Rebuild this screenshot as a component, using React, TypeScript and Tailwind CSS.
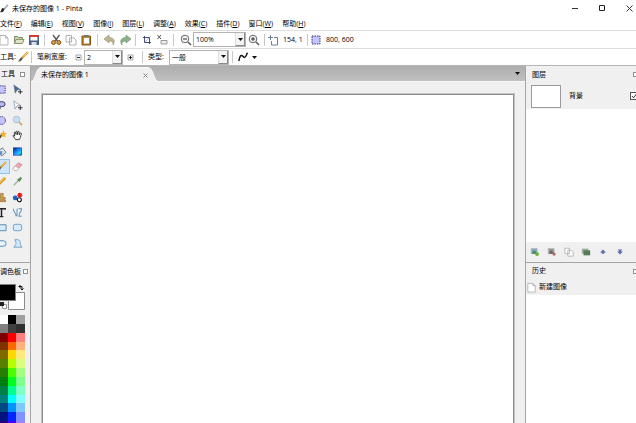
import React from 'react';

type IconProps = { children: React.ReactNode; className?: string; box?: string };

const Icon: React.FC<IconProps> = ({ children, className = 'w-3 h-3', box = '0 0 12 12' }) => (
    <svg viewBox={box} className={`block shrink-0 ${className}`} fill="none" aria-hidden="true">
        {children}
    </svg>
);

const menus = [
    ['文件', 'F'],
    ['编辑', 'E'],
    ['视图', 'V'],
    ['图像', 'I'],
    ['图层', 'L'],
    ['调整', 'A'],
    ['效果', 'C'],
    ['插件', 'D'],
    ['窗口', 'W'],
    ['帮助', 'H'],
];

const brush = (
    <>
        <path d="M11 1 5 7" stroke="#e0a030" strokeWidth="2.2" />
        <path d="M11 1 7 5" stroke="#f6cf6a" strokeWidth="1" />
        <path d="M5.8 7.2C5 10 3 10.5 1 10.5 2.5 9.5 2.5 7 4.5 6.2Z" fill="#5a5a5a" />
    </>
);
const page = (
    <path d="M2 1.5h5.5L10 4v7H2zM7.5 1.5V4H10" fill="#fff" stroke="#a4a4a4" strokeWidth="0.8" />
);
const copy = (
    <path d="M1 1.5h5.5V8H1zM4.5 4H9l2 2v5H4.5z" fill="#fff" stroke="#a9a9a9" strokeWidth="0.9" />
);
const magnifier = (
    <>
        <circle cx="5" cy="5" r="3.8" fill="#f2f2f2" stroke="#666" strokeWidth="1" />
        <path d="m8 8 3 3" stroke="#555" strokeWidth="1.4" />
    </>
);
const dashed = (
    <rect x="2" y="2" width="8" height="8" fill="#c4c4ff" stroke="#34347a" strokeDasharray="1.5 1" />
);

const tools: { name: string; art: React.ReactNode }[] = [
    { name: '矩形选择', art: dashed },
    {
        name: '移动所选像素',
        art: (
            <>
                <path d="m2 1 7 5-3.5.5L3.5 10z" fill="#4a6a8c" stroke="#53708d" strokeWidth="0.6" />
                <path d="M9 6v5M6.5 8.5h5" stroke="#222" />
            </>
        ),
    },
    {
        name: '套索选择',
        art: (
            <>
                <ellipse cx="6" cy="4.5" rx="4" ry="2.8" fill="#b4b6ed" stroke="#33385c" />
                <path d="M3 6.5c2 1 2 3 0 4" stroke="#33385c" strokeWidth="1.2" />
            </>
        ),
    },
    {
        name: '移动选区',
        art: (
            <>
                <path d="m2 1 7 5-3.5.5L3.5 10z" fill="#fff" stroke="#7d8fa5" strokeWidth="0.8" />
                <path d="M9 6v5M6.5 8.5h5" stroke="#222" />
            </>
        ),
    },
    {
        name: '椭圆选择',
        art: <circle cx="6" cy="6" r="4.3" fill="#c4c4ff" stroke="#34347a" strokeDasharray="1.5 1" />,
    },
    {
        name: '缩放',
        art: (
            <>
                <path d="m7 7 4 4" stroke="#d9a868" strokeWidth="2" />
                <circle cx="5" cy="5" r="3.6" fill="#c3e0f5" stroke="#a8bccb" />
            </>
        ),
    },
    {
        name: '魔术棒',
        art: (
            <>
                <path d="m1 11 6-6" stroke="#4a4030" strokeWidth="2.4" />
                <path d="m8 0 1 3 3 .5-2.200 1.800.7 3L8 7 5.500 8l.8-2.500-1.800-2L7 3z" fill="#f5b229" />
            </>
        ),
    },
    {
        name: '平移',
        art: (
            <path
                d="M4 10.5 1 6.5c0-1 1-1 2 .2L2.5 3c.2-1 1-1 1.5 0l.5 2-.2-3c.3-1 1.2-1 1.5 0L6 5l.5-3c.4-.8 1.3-.6 1.4.2L7.8 5.5 9 3.5c.6-.7 1.4-.2 1.2.7L9 8.5 8 10.5z"
                fill="#fff"
                stroke="#222"
                strokeWidth="0.9"
            />
        ),
    },
    {
        name: '油漆桶',
        art: (
            <>
                <path d="m3 5 4-3 4 5-5 4z" fill="#dbe3ea" stroke="#6c7d8c" />
                <path d="M0 4c1 2 5 1 7 2l-1 4-4-3z" fill="#5b91c8" />
            </>
        ),
    },
    {
        name: '渐变',
        art: (
            <>
                <defs>
                    <linearGradient id="gradTool" x1="0" y1="0" x2="1" y2="1">
                        <stop offset="0" stopColor="#00157e" />
                        <stop offset="0.5" stopColor="#1e90ff" />
                        <stop offset="0.75" stopColor="#25d5e8" />
                        <stop offset="1" stopColor="#1838c0" />
                    </linearGradient>
                </defs>
                <rect x="1.5" y="2" width="9" height="8" fill="url(#gradTool)" stroke="#1730a0" strokeWidth="0.7" />
            </>
        ),
    },
    { name: '画笔', art: brush },
    {
        name: '橡皮擦',
        art: (
            <>
                <path d="m1 8 6-6 4 2-6 6.5H3z" fill="#f4a6ae" stroke="#b98b90" strokeWidth="0.8" />
                <path d="m1 8 2.5-2.5L7.5 8 5 10.5H3z" fill="#fff" stroke="#a9a3a3" strokeWidth="0.7" />
            </>
        ),
    },
    {
        name: '铅笔',
        art: (
            <>
                <path d="m10 2-7 7" stroke="#e39a2c" strokeWidth="3" />
                <path d="m9.5 1.5-7 7" stroke="#fbd680" strokeWidth="1" />
                <path d="m1 11 1-3 2 2z" fill="#6b4d27" />
            </>
        ),
    },
    {
        name: '取色器',
        art: (
            <>
                <path d="m2 10 5-5" stroke="#a2b09b" strokeWidth="1.5" />
                <path d="m6 4 2 2 2.5-3.5-1-1z" fill="#4a9b45" stroke="#4d7c49" strokeWidth="0.8" />
            </>
        ),
    },
    {
        name: '克隆图章',
        art: <path d="M5 1.5h3L7.5 6H10v2H2V6h3zM1.5 9h9v1.5h-9z" fill="#d7a34b" stroke="#8e6423" strokeWidth="0.7" />,
    },
    {
        name: '重新着色',
        art: (
            <>
                <circle cx="8.5" cy="3.5" r="2.6" fill="#ee1c1c" />
                <circle cx="3.5" cy="6.5" r="2.6" fill="#1d5fc2" />
                <circle cx="8" cy="8.5" r="2.2" fill="#fff" stroke="#111" strokeWidth="1.2" />
            </>
        ),
    },
    {
        name: '文字',
        art: <path d="M2 3V2h8v1M6 2v8M4 10.5h4" stroke="#222" strokeWidth="1.6" />,
    },
    {
        name: '直线/曲线',
        art: (
            <path d="M1.5 2c0 4 3 4 3 8M5.5 2v8M7 2h3.5c0 3-3 5-3 8h3" stroke="#6390bd" strokeWidth="1.1" />
        ),
    },
    { name: '矩形', art: <path d="M1 3h10v6.5H1z" fill="#d7ebfa" stroke="#4f86b5" /> },
    { name: '圆角矩形', art: <rect x="1.5" y="2.5" width="9" height="7" rx="2" fill="#d7ebfa" stroke="#699bc4" /> },
    { name: '椭圆', art: <rect x="0" y="3" width="11" height="6" rx="3" fill="#e7f4fd" stroke="#4f86b5" /> },
    {
        name: '自由形状',
        art: <path d="M3 2c4-1 6 1 6 3s0 3 2 5H2c3-3 3-5 1-8z" fill="#d7ebfa" stroke="#699bc4" />,
    },
];

const palette = [
    'bg-[#ffffff]', 'bg-[#000000]', 'bg-[#a0a0a0]',
    'bg-[#808080]', 'bg-[#404040]', 'bg-[#303030]',
    'bg-[#7f0000]', 'bg-[#ff0000]', 'bg-[#ff7f7f]',
    'bg-[#7f3300]', 'bg-[#ff6a00]', 'bg-[#ffb27f]',
    'bg-[#7f6a00]', 'bg-[#ffd800]', 'bg-[#ffe97f]',
    'bg-[#5b7f00]', 'bg-[#b6ff00]', 'bg-[#daff7f]',
    'bg-[#267f00]', 'bg-[#4cff00]', 'bg-[#a5ff7f]',
    'bg-[#007f0e]', 'bg-[#00ff21]', 'bg-[#7fff8e]',
    'bg-[#007f46]', 'bg-[#00ff90]', 'bg-[#7fffc5]',
    'bg-[#007f7f]', 'bg-[#00ffff]', 'bg-[#7fffff]',
    'bg-[#004a7f]', 'bg-[#0094ff]', 'bg-[#7fc9ff]',
    'bg-[#00137f]', 'bg-[#0026ff]', 'bg-[#7f92ff]',
    'bg-[#21007f]', 'bg-[#4800ff]', 'bg-[#a17fff]',
];

const ToolButton: React.FC<{ label: string; children: React.ReactNode }> = ({ label, children }) => (
    <button type="button" aria-label={label} className="flex w-[15px] shrink-0 items-center justify-center">
        <Icon>{children}</Icon>
    </button>
);

const Separator: React.FC<{ className?: string }> = ({ className = 'mx-[3px]' }) => (
    <span className={`h-3 w-px shrink-0 bg-[#c8c8c8] ${className}`} />
);

const Arrow: React.FC = () => (
    <Icon className="h-[3px] w-[5px]" box="0 0 5 3">
        <path d="M0 0h5L2.5 3z" fill="#111" />
    </Icon>
);

const Combo: React.FC<{ label: string; options: string[]; className: string }> = ({ label, options, className }) => (
    <div className={`relative h-[15px] shrink-0 border border-[#b4b4b4] bg-white ${className}`}>
        <select aria-label={label} className="block h-full w-full appearance-none bg-transparent pl-[2px] leading-[13px] outline-none">
            {options.map((o) => (
                <option key={o}>{o}</option>
            ))}
        </select>
        <span className="pointer-events-none absolute inset-y-0 right-0 flex w-[10px] items-center justify-center border-r border-b border-l border-[#8a8a8a] border-l-[#dedede] bg-[#f3f3f3]">
            <Arrow />
        </span>
    </div>
);

const FloatButton: React.FC<{ label: string; className?: string }> = ({ label, className = '' }) => (
    <button type="button" aria-label={label} className={`h-[5px] w-[5px] shrink-0 border border-[#909090] bg-white ${className}`} />
);

const TitleBar: React.FC = () => (
    <header className="flex h-[17px] shrink-0 items-center">
        <Icon className="h-[11px] w-[9px]">
            <path d="m10.5 1-5 6" stroke="#a9adb0" strokeWidth="2.5" />
            <path d="M6 6.5 3.5 5C1.5 6.5 2 9 0 11c3 .5 5.5-1 6-4.5z" fill="#2b2b2b" />
        </Icon>
        <h1 className="ml-[3px]">未保存的图像 1 - Pinta</h1>
        <div className="ml-auto flex">
            <button type="button" aria-label="最小化" className="flex w-[27px] justify-center">
                <Icon className="h-[7px] w-[7px]" box="0 0 7 7"><path d="M0 3.5h6" stroke="#333" /></Icon>
            </button>
            <button type="button" aria-label="最大化" className="flex w-[27px] justify-center">
                <Icon className="h-[7px] w-[7px]" box="0 0 7 7"><path d="M.5.5h5v5h-5z" stroke="#222" /></Icon>
            </button>
            <button type="button" aria-label="关闭" className="flex w-[20px] justify-center pl-[6px]">
                <Icon className="h-[7px] w-[7px]" box="0 0 7 7"><path d="m.5.5 6 6m0-6-6 6" stroke="#222" strokeWidth="0.9" /></Icon>
            </button>
        </div>
    </header>
);

const MenuBar: React.FC = () => (
    <nav className="flex h-[13px] shrink-0 items-center gap-[9px]">
        {menus.map(([name, key]) => (
            <button key={key} type="button" className="whitespace-nowrap">
                {name}(<u>{key}</u>)
            </button>
        ))}
    </nav>
);

const MainToolbar: React.FC = () => (
    <div className="flex h-[18px] shrink-0 items-center overflow-hidden border-t border-[#dedede]">
        <div className="-ml-1 flex">
            <ToolButton label="新建">{page}</ToolButton>
            <ToolButton label="打开">
                <path d="M1.5 9.5v-7h3l1 1h4v2" fill="#c9d3ad" stroke="#808d62" />
                <path d="m1.5 9.5 1.5-4h8l-1.5 4z" fill="#dce4c4" stroke="#8b986d" />
            </ToolButton>
            <ToolButton label="保存">
                <path d="M1 1h10v10H1z" fill="#4a6288" />
                <path d="M1 1h10v2H1z" fill="#cf3a35" />
                <path d="M2.5 3h7v3.5h-7z" fill="#fff" />
                <path d="M3.5 8h5v3h-5z" fill="#d6dfeb" />
            </ToolButton>
        </div>
        <Separator />
        <div className="flex">
            <ToolButton label="剪切">
                <path d="m3 1 4.5 6M9.5 1 5 7" stroke="#555" strokeWidth="1.3" />
                <circle cx="3.5" cy="8.5" r="2" fill="#d49a48" stroke="#8a5b1d" />
                <circle cx="8.8" cy="8.5" r="2" fill="#d49a48" stroke="#8a5b1d" />
            </ToolButton>
            <ToolButton label="复制">{copy}</ToolButton>
            <ToolButton label="粘贴">
                <path d="M2 2h8.5v9H2z" fill="#c58632" stroke="#805216" />
                <path d="M4 4h5v5.5H4z" fill="#fff" />
                <path d="M4 1h4.5v2H4z" fill="#777" />
            </ToolButton>
        </div>
        <Separator className="mx-1" />
        <div className="flex">
            <ToolButton label="撤消">
                <path d="m0 5 5-4v2.5c4 0 7 2.5 4 7.5.5-3-1-4-4-4v2z" fill="#bdb494" stroke="#958c6b" strokeWidth="0.6" />
            </ToolButton>
            <ToolButton label="重做">
                <path d="M12 5 7 1v2.5c-4 0-7 2.5-4 7.5C2.5 8 4 7 7 7v2z" fill="#8eb08c" stroke="#68906a" strokeWidth="0.6" />
            </ToolButton>
        </div>
        <Separator />
        <div className="flex">
            <ToolButton label="裁剪">
                <path d="M3.5 2v6.500H10M2 3.500h6.500V10" stroke="#484c78" />
                <path d="m3.5 8.5 6-6" stroke="#8b8eae" strokeWidth="0.6" />
            </ToolButton>
            <ToolButton label="取消选择">
                <path d="m1.5 1 3.5 4m0-4L1.5 5" stroke="#555" />
                <path d="M5 6.5h6V10H5z" fill="#eee" stroke="#999" />
            </ToolButton>
        </div>
        <Separator className="mx-1" />
        <ToolButton label="缩小">{magnifier}<path d="M3 5h4" stroke="#333" /></ToolButton>
        <Combo label="缩放比例" options={['100%', '50%', '200%']} className="w-[53px]" />
        <ToolButton label="放大">{magnifier}<path d="M3 5h4M5 3v4" stroke="#333" /></ToolButton>
        <Separator />
        <Icon>
            <path d="M2.5 1v5M0 3.5h5" stroke="#6a8091" />
            <path d="M6 3.5h3.5V11h-6V7" stroke="#6a8091" />
        </Icon>
        <span className="ml-[3px] w-[22px] whitespace-nowrap">154, 1</span>
        <Separator className="mx-[2px]" />
        <Icon>{dashed}</Icon>
        <span className="ml-1 whitespace-nowrap">800, 600</span>
    </div>
);

const OptionsToolbar: React.FC = () => (
    <div className="flex h-[17px] shrink-0 items-center overflow-hidden border-t border-[#dedede]">
        <span className="w-[17px] whitespace-nowrap">工具:</span>
        <Icon>{brush}</Icon>
        <Separator className="mr-[5px] ml-[2px]" />
        <span className="w-[36px] whitespace-nowrap">笔刷宽度:</span>
        <button type="button" aria-label="减小宽度" className="mx-[2px]">
            <Icon className="h-[7px] w-[7px]" box="0 0 7 7">
                <path d="M1 1h5v5H1z" fill="#f4f4f4" stroke="#aaa" /><path d="M2 3.5h3" stroke="#333" />
            </Icon>
        </button>
        <Combo label="笔刷宽度" options={['2', '4', '8']} className="w-[39px]" />
        <button type="button" aria-label="增大宽度" className="mx-1">
            <Icon className="h-[7px] w-[7px]" box="0 0 7 7">
                <path d="M1 1h5v5H1z" fill="#f4f4f4" stroke="#aaa" /><path d="M2 3.5h3M3.5 2v3" stroke="#222" />
            </Icon>
        </button>
        <Separator className="mr-[5px] ml-1" />
        <span className="w-[21px] whitespace-nowrap">类型:</span>
        <Combo label="类型" options={['一般', '圆形', '网格']} className="w-[60px]" />
        <Separator className="mr-[5px] ml-[3px]" />
        <button type="button" aria-label="抗锯齿" className="flex items-center gap-1">
            <Icon className="h-[10px] w-[10px]">
                <path d="M1 11C2 5 3 3.5 5 4.5s2 3.5 4 1S10 2.5 11.5 1" stroke="#111" strokeWidth="1.7" />
            </Icon>
            <Arrow />
        </button>
    </div>
);

const ToolBox: React.FC = () => (
    <aside className="flex w-[31px] shrink-0 flex-col overflow-hidden border-r border-[#a5a5a5]">
        <div className="flex h-4 shrink-0 items-center pl-px">
            <h2 className="w-[19px] whitespace-nowrap">工具</h2>
            <FloatButton label="浮动工具" />
        </div>
        <div className="-ml-[6px] grid h-[180px] w-[31px] shrink-0 grid-cols-2 grid-rows-[repeat(11,minmax(0,1fr))] pb-[11px]">
            {tools.map((t) => (
                <button
                    key={t.name}
                    type="button"
                    aria-label={t.name}
                    className={`flex items-center justify-center ${t.name === '画笔' ? 'border border-[#90c3ec] bg-[#cbe5fa]' : ''}`}
                >
                    <Icon className="h-[11px] w-[11px]">{t.art}</Icon>
                </button>
            ))}
        </div>
        <div className="flex h-[18px] shrink-0 items-center border-t border-[#a5a5a5]">
            <h2 className="w-[23px] whitespace-nowrap">调色板</h2>
            <FloatButton label="浮动调色板" />
        </div>
        <svg viewBox="0 0 30 35" className="block h-[35px] w-[30px] shrink-0" role="img" aria-label="当前颜色">
            <path d="M8.5 12.5h16v17h-16z" fill="#fff" stroke="#8b8b8b" />
            <path d="M-1 4.5h16.500v16H-1z" fill="#000" stroke="#808080" />
            <path d="M19 6.5h3v3M20.5 5 19 6.5 20.5 8M20.5 8.5 22 10l1.5-1.5" fill="none" stroke="#111" />
            <path d="M2.5 24.5h4v4h-4z" fill="#fff" stroke="#999" />
            <path d="M0 22h4v4H0z" fill="#222" />
        </svg>
        <div className="-ml-px grid h-[115px] w-[26px] shrink-0 grid-cols-3 grid-rows-[repeat(13,minmax(0,1fr))]">
            {palette.map((c) => (
                <button key={c} type="button" aria-label="颜色" className={c} />
            ))}
        </div>
    </aside>
);

const Document: React.FC = () => (
    <main className="flex min-w-0 flex-1 flex-col">
        <div className="relative flex h-4 shrink-0 items-center border-b border-[#f8f8f8] bg-gradient-to-b from-[#adadad] to-[#c0c0c0]">
            <svg viewBox="0 0 128 16" className="absolute top-0 left-0 h-4 w-32" aria-hidden="true">
                <path d="M0 16C5 15 4 2 10 1.5h107C123 2 122 15 128 16z" fill="#f0f0f0" stroke="#f9f9f9" />
            </svg>
            <div className="relative flex w-[117px] items-center justify-between pt-[3px] pl-[10px]">
                <span className="whitespace-nowrap">未保存的图像 1</span>
                <button type="button" aria-label="关闭标签">
                    <Icon className="h-[5px] w-[5px]" box="0 0 5 5"><path d="m.5.5 4 4m0-4-4 4" stroke="#8a8a8a" /></Icon>
                </button>
            </div>
            <button type="button" aria-label="标签列表" className="mr-[5px] ml-auto"><Arrow /></button>
        </div>
        <div className="flex min-h-0 flex-1 px-[10px] pt-[11px]">
            <div className="flex flex-1 border border-b-0 border-[#c4c4c4]">
                <div className="flex-1 border border-b-0 border-[#8c8c8c] bg-white" />
            </div>
        </div>
    </main>
);

const layerActions: { name: string; art: React.ReactNode }[] = [
    {
        name: '添加图层',
        art: (
            <>
                <path d="M1.5 2h7v6h-7z" fill="#7fa5bd" stroke="#a7b5bd" />
                <path d="m2 8 3-4 4 4z" fill="#4b8650" />
                <circle cx="8.5" cy="8.5" r="2.3" fill="#66b23b" />
            </>
        ),
    },
    {
        name: '删除图层',
        art: (
            <>
                <path d="M1.5 2h7v6h-7z" fill="#929292" stroke="#b5b5b5" />
                <path d="m2 8 3-4 4 4z" fill="#666" />
                <circle cx="8.5" cy="8.5" r="2" fill="#ad7464" />
            </>
        ),
    },
    { name: '复制图层', art: copy },
    {
        name: '合并图层',
        art: (
            <>
                <path d="M1 2h8v6H1z" fill="#9cab9f" /><path d="M3 4h8v6H3z" fill="#567b5b" />
            </>
        ),
    },
    { name: '上移图层', art: <path d="m6 3 3.5 3.5h-2V8h-3V6.5h-2z" fill="#5d6fa8" /> },
    { name: '下移图层', art: <path d="M6 9 2.5 5.5h2V4h-1V3h5v1h-1v1.5h2z" fill="#5d6fa8" /> },
];

const SidePanels: React.FC = () => (
    <aside className="flex w-[111px] shrink-0 flex-col overflow-hidden border-l border-[#a5a5a5]">
        <div className="flex h-[17px] shrink-0 items-center justify-between pl-[6px]">
            <h2>图层</h2>
            <FloatButton label="浮动图层" className="-mr-[2px]" />
        </div>
        <div className="flex min-h-0 shrink-0 basis-[159px] flex-col bg-white">
            <label className="flex h-[26px] items-center overflow-hidden bg-[#f0f0f0] pl-[5px]">
                <span className="h-[23px] w-[30px] border border-[#9a9a9a] bg-white" />
                <span className="ml-2 flex-1">背景</span>
                <span className="relative -mr-[2px] h-2 w-2">
                    <input type="checkbox" defaultChecked aria-label="显示图层" className="block h-2 w-2 appearance-none border border-[#555] bg-white" />
                    <Icon className="pointer-events-none absolute inset-0 h-2 w-2" box="0 0 8 8"><path d="m2 4 1.5 1.8L6.5 2" stroke="#333" /></Icon>
                </span>
            </label>
        </div>
        <div className="flex h-5 shrink-0 items-center">
            {layerActions.map((a) => (
                <button key={a.name} type="button" aria-label={a.name} className="flex w-[17px] justify-center">
                    <Icon className="h-[10px] w-[10px]">{a.art}</Icon>
                </button>
            ))}
        </div>
        <div className="flex h-[17px] shrink-0 items-center justify-between border-t border-[#a5a5a5] pl-[6px]">
            <h2>历史</h2>
            <FloatButton label="浮动历史" className="-mr-[2px]" />
        </div>
        <ul className="flex-1 bg-white">
            <li className="flex h-4 items-center bg-[#f0f0f0]">
                <Icon className="h-[11px] w-[11px]">{page}</Icon>
                <span className="ml-[2px]">新建图像</span>
            </li>
        </ul>
    </aside>
);

const App: React.FC = () => (
    <div className="flex h-screen flex-col overflow-hidden bg-white font-['Open_Sans','Noto_Sans_CJK_SC',sans-serif] text-[7px] leading-[10px] text-black">
        <TitleBar />
        <MenuBar />
        <MainToolbar />
        <OptionsToolbar />
        <div className="flex min-h-0 flex-1 border-t border-[#b5b5b5] bg-[#f0f0f0]">
            <ToolBox />
            <Document />
            <SidePanels />
        </div>
    </div>
);

export default App;
